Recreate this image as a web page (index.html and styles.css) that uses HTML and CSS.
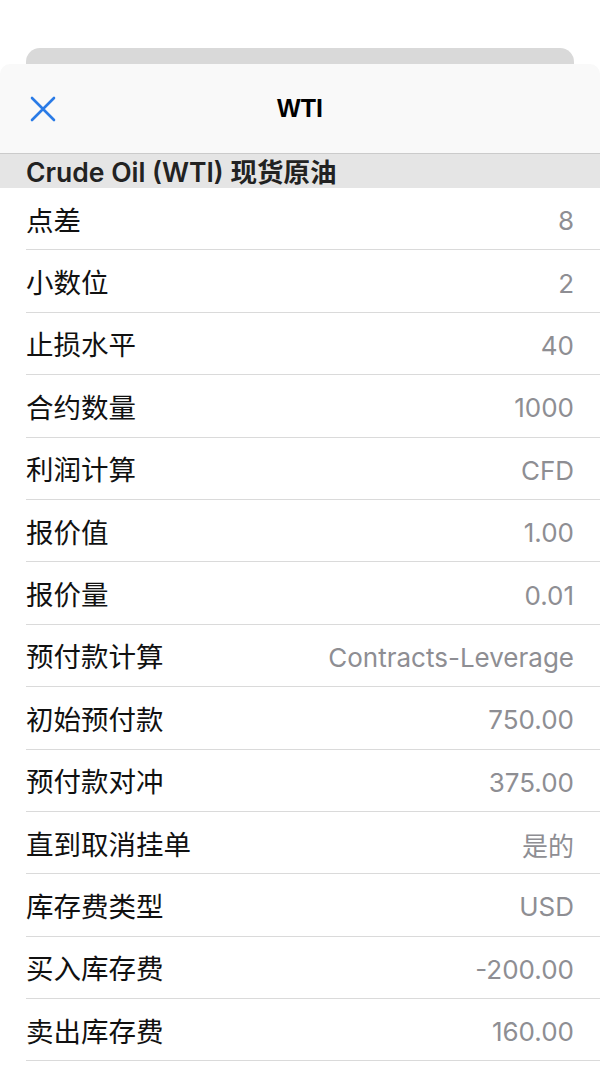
FILE: index.html
```html
<!DOCTYPE html>
<html lang="zh-CN">
<head>
    <meta charset="UTF-8">
    <meta name="viewport" content="width=device-width, initial-scale=1.0">
    <title>WTI</title>
    <link rel="stylesheet" href="styles.css">
</head>
<body>
    <div class="backdrop">
        <div class="card-behind"></div>
    </div>

    <div class="sheet">
        <div class="sheet-header">
            <button class="close-btn" aria-label="关闭">
                <svg width="28" height="28" viewBox="0 0 28 28">
                    <path d="M3 3 L25 25 M25 3 L3 25" stroke="#2a7be6" stroke-width="2.6" stroke-linecap="round" fill="none"/>
                </svg>
            </button>
            <div class="title">WTI</div>
            <div></div>
        </div>

        <div class="section-title">Crude Oil (WTI) 现货原油</div>

        <ul class="spec-list">
            <li class="spec-row"><span class="label">点差</span><span class="value">8</span></li>
            <li class="spec-row"><span class="label">小数位</span><span class="value">2</span></li>
            <li class="spec-row"><span class="label">止损水平</span><span class="value">40</span></li>
            <li class="spec-row"><span class="label">合约数量</span><span class="value">1000</span></li>
            <li class="spec-row"><span class="label">利润计算</span><span class="value">CFD</span></li>
            <li class="spec-row"><span class="label">报价值</span><span class="value">1.00</span></li>
            <li class="spec-row"><span class="label">报价量</span><span class="value">0.01</span></li>
            <li class="spec-row"><span class="label">预付款计算</span><span class="value">Contracts-Leverage</span></li>
            <li class="spec-row"><span class="label">初始预付款</span><span class="value">750.00</span></li>
            <li class="spec-row"><span class="label">预付款对冲</span><span class="value">375.00</span></li>
            <li class="spec-row"><span class="label">直到取消挂单</span><span class="value">是的</span></li>
            <li class="spec-row"><span class="label">库存费类型</span><span class="value">USD</span></li>
            <li class="spec-row"><span class="label">买入库存费</span><span class="value">-200.00</span></li>
            <li class="spec-row"><span class="label">卖出库存费</span><span class="value">160.00</span></li>
        </ul>
    </div>
</body>
</html>
```

FILE: styles.css
```css
* {
    box-sizing: border-box;
}
body {
    margin: 0;
    background-color: #fff;
    font-family: 'Inter', 'Noto Sans CJK SC', sans-serif;
    color: #111;
    height: 1068px;
    overflow: hidden;
}
.backdrop {
    padding-top: 48px;
}
.card-behind {
    margin: 0 26px;
    height: 16px;
    background-color: #d9d9d9;
    border-radius: 14px 14px 0 0;
}
.sheet {
    background-color: #fff;
    border-radius: 10px 10px 0 0;
    overflow: hidden;
}
.sheet-header {
    height: 90px;
    display: grid;
    grid-template-columns: 1fr auto 1fr;
    align-items: center;
    background-color: #f9f9f9;
    border-bottom: 1px solid #cbcbcb;
}
.close-btn {
    justify-self: start;
    margin-left: 29px;
    padding: 0;
    border: none;
    background: none;
    display: flex;
    cursor: pointer;
}
.title {
    font-family: 'Liberation Sans', sans-serif;
    font-size: 25px;
    font-weight: bold;
    color: #000;
}
.section-title {
    height: 34px;
    line-height: 37px;
    padding: 0 26px;
    background-color: #e5e5e5;
    font-size: 26.5px;
    font-weight: 600;
    color: #222;
    white-space: nowrap;
    overflow: hidden;
}
.spec-list {
    list-style: none;
    margin: 0;
    padding: 0;
}
.spec-row {
    height: 62.4px;
    margin-left: 26px;
    padding-right: 26px;
    display: flex;
    justify-content: space-between;
    align-items: center;
    border-bottom: 1px solid #dadada;
    font-size: 26px;
}
.label {
    font-size: 27.5px;
    color: #111;
}
.value {
    padding-top: 4px;
    color: #8e8e93;
}
```
